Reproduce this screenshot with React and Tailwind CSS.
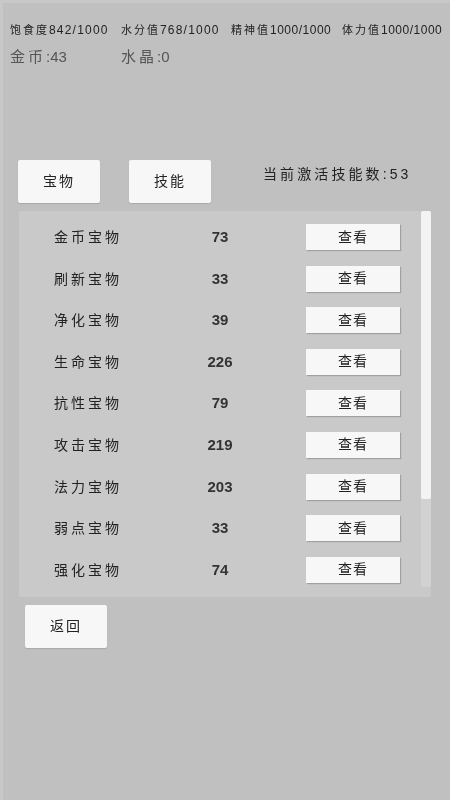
const stats = [
  ["饱食度", "842/1000", "w-[111px]", "tracking-[1.2px]"],
  ["水分值", "768/1000", "w-[110px]", "tracking-[1.2px]"],
  ["精神值", "1000/1000", "w-[111px]", "tracking-[0.5px]"],
  ["体力值", "1000/1000", "w-[99px]", "tracking-[0.5px]"],
];

const treasures = [
  ["金币宝物", 73],
  ["刷新宝物", 33],
  ["净化宝物", 39],
  ["生命宝物", 226],
  ["抗性宝物", 79],
  ["攻击宝物", 219],
  ["法力宝物", 203],
  ["弱点宝物", 33],
  ["强化宝物", 74],
];

const cjk = "font-['Liberation_Sans','Noto_Sans_CJK_SC',sans-serif]";

function BigButton({ label, className = "" }) {
  return (
    <button className={`h-[43px] w-[82px] rounded-[2px] bg-[#f7f7f7] text-[14px] tracking-[2px] text-[#222] shadow-[0_1px_1px_rgba(0,0,0,0.12)] ${className}`}>
      {label}
    </button>
  );
}

export default function App() {
  return (
    <div className={`h-[800px] w-[450px] overflow-hidden border-t-[3px] border-l-[3px] border-[#c8c8c8] bg-[#c0c0c0] blur-[0.5px] ${cjk}`}>
      {/* status */}
      <div className="flex pl-[7px] pt-[20px] text-[11px] leading-[14px] text-[#222]">
        {stats.map(([name, value, w, spacing]) => (
          <div key={name} className={`whitespace-nowrap ${w}`}>
            <span className="tracking-[2px]">{name}</span>
            <span className={`text-[12px] ${spacing}`}>{value}</span>
          </div>
        ))}
      </div>
      <div className="flex pl-[7px] pt-[11px] text-[15px] leading-[18px] text-[#555]">
        <div className="w-[111px]"><span className="tracking-[3px]">金币</span>:43</div>
        <div><span className="tracking-[3px]">水晶</span>:0</div>
      </div>

      {/* tabs */}
      <div className="flex pl-[15px] pt-[94px]">
        <BigButton label="宝物" />
        <BigButton label="技能" className="ml-[29px]" />
        <div className="ml-[52px] mt-[5px] whitespace-nowrap text-[14px] leading-[18px] tracking-[3.1px] text-[#222]">当前激活技能数:53</div>
      </div>

      {/* list */}
      <div className="relative ml-[16px] mt-[8px] h-[386px] w-[412px] rounded-[2px] bg-[#c9c9c9] pt-[13px]">
        {treasures.map(([name, count]) => (
          <div key={name} className="flex h-[41.6px] items-start">
            <div className="ml-[35px] w-[146px] pt-[3px] text-[14px] leading-[20px] tracking-[3px] text-[#222]">{name}</div>
            <div className="w-[40px] pt-[3px] text-center text-[15px] font-bold leading-[20px] text-[#333]">{count}</div>
            <button className="ml-[66px] h-[26px] w-[94px] bg-[#f7f7f7] text-[14px] tracking-[1px] text-[#222] shadow-[1px_1px_1px_rgba(0,0,0,0.2)]">查看</button>
          </div>
        ))}
        {/* scrollbar */}
        <div className="absolute right-0 top-0 flex h-[376px] w-[10px] flex-col rounded-[2px] bg-[#d2d2d2]">
          <div className="h-[288px] rounded-[2px] bg-[#f3f3f3]" />
        </div>
      </div>

      <div className="pl-[22px] pt-[8px]">
        <BigButton label="返回" />
      </div>
    </div>
  );
}
